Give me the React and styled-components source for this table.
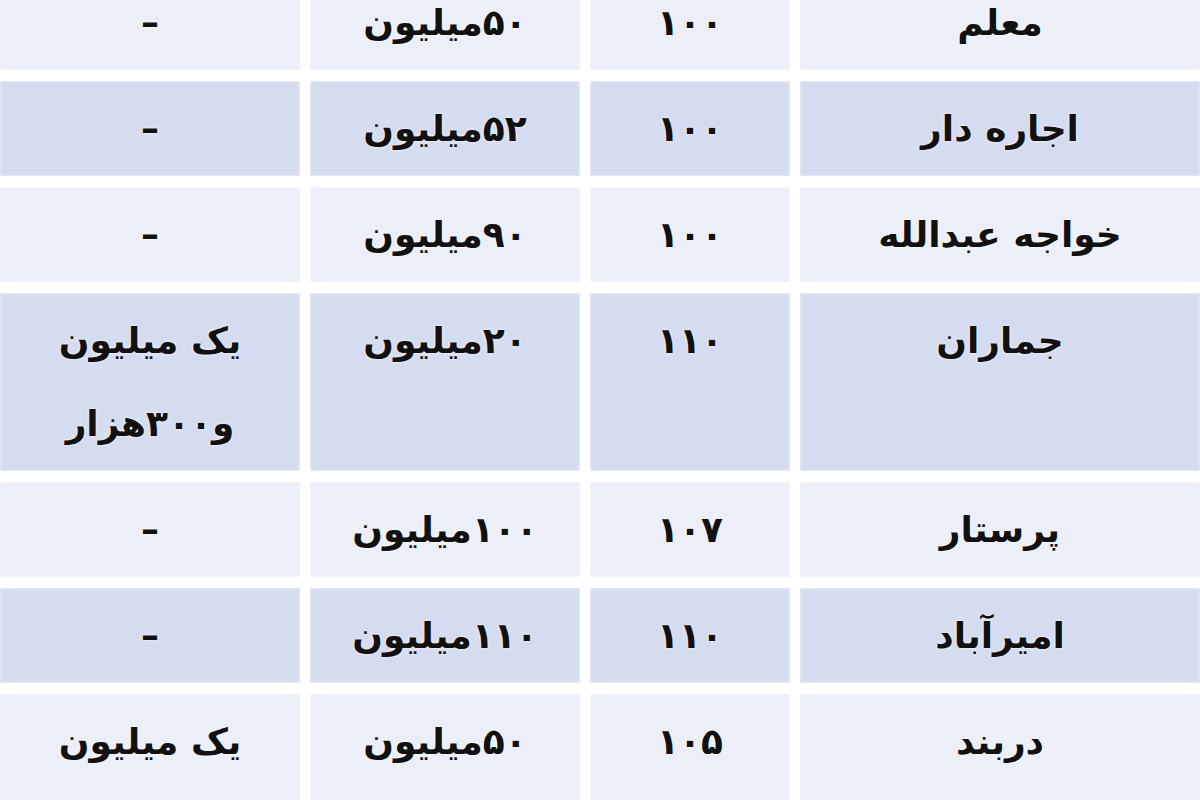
import React from "react";
import styled, { createGlobalStyle } from "styled-components";

// Rent prices by neighbourhood: name, area, deposit, monthly rent

const rows = [
  { name: "معلم", area: "۱۰۰", deposit: "۵۰میلیون", rent: ["–"] },
  { name: "اجاره دار", area: "۱۰۰", deposit: "۵۲میلیون", rent: ["–"] },
  { name: "خواجه عبدالله", area: "۱۰۰", deposit: "۹۰میلیون", rent: ["–"] },
  { name: "جماران", area: "۱۱۰", deposit: "۲۰میلیون", rent: ["یک میلیون", "و۳۰۰هزار"] },
  { name: "پرستار", area: "۱۰۷", deposit: "۱۰۰میلیون", rent: ["–"] },
  { name: "امیرآباد", area: "۱۱۰", deposit: "۱۱۰میلیون", rent: ["–"] },
  { name: "دربند", area: "۱۰۵", deposit: "۵۰میلیون", rent: ["یک میلیون", "و۲۰۰هزار"] },
];

const GlobalStyle = createGlobalStyle`
  html, body {
    margin: 0;
    padding: 0;
    background: #ffffff;
    overflow: hidden;
  }
  body {
    font-family: "DejaVu Sans", "Noto Sans", sans-serif;
  }
`;

const Page = styled.div`
  width: 1200px;
  height: 800px;
  overflow: hidden;
  background: #ffffff;
`;

const Table = styled.div`
  display: flex;
  flex-direction: column;
  gap: 11px;
  margin-top: -25px;
  direction: rtl;
`;

const Row = styled.div`
  display: grid;
  grid-template-columns: 400px 200px 270px 300px;
  column-gap: 10px;
`;

const Cell = styled.div`
  background: ${(p) => (p.$alt ? "#d6dcef" : "#eceff8")};
  box-shadow: inset 0 0 3px rgba(255, 255, 255, 0.8);
  padding: 6px 10px;
  min-height: 83px;
  text-align: center;
  font-family: "DejaVu Sans", sans-serif;
  font-weight: bold;
  font-size: 36px;
  line-height: 83px;
  color: #111111;
  text-shadow: 0 0 3px rgba(255, 255, 255, 0.9);
`;

const Line = styled.div`
  white-space: nowrap;
`;

export default function App() {
  return (
    <Page>
      <GlobalStyle />
      <Table>
        {rows.map((r, i) => (
          <Row key={r.name}>
            <Cell $alt={i % 2 === 1}>{r.name}</Cell>
            <Cell $alt={i % 2 === 1}>{r.area}</Cell>
            <Cell $alt={i % 2 === 1}>{r.deposit}</Cell>
            <Cell $alt={i % 2 === 1}>
              {r.rent.map((t) => (
                <Line key={t}>{t}</Line>
              ))}
            </Cell>
          </Row>
        ))}
      </Table>
    </Page>
  );
}
